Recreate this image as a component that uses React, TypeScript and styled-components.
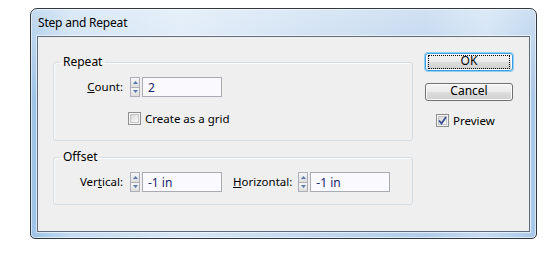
import React from 'react';
import styled, { createGlobalStyle } from 'styled-components';

const GlobalStyle = createGlobalStyle`
	html, body {
		margin: 0;
		padding: 0;
		background: #ffffff;
	}
	body {
		font-family: 'Noto Sans', 'Open Sans', sans-serif;
		font-size: 11.5px;
		color: #000000;
	}
`;

const Page = styled.div`
	padding: 8px 0 0 30px;
	width: 552px;
	height: 255px;
	box-sizing: border-box;
`;

const Window = styled.div`
	width: 507px;
	height: 231px;
	box-sizing: border-box;
	border: 1px solid #33383e;
	border-radius: 7px 7px 5px 5px;
	padding: 0 6px 6px 6px;
	display: flex;
	flex-direction: column;
	background:
		linear-gradient(180deg, rgba(255, 255, 255, 0.4) 0%, rgba(255, 255, 255, 0) 40%),
		linear-gradient(90deg, #9cc2e6 0%, #c4dbf2 8%, #d6e6f6 30%, #c2d8ef 55%, #b2cdea 78%, #c6dcf2 90%, #a9c8e8 100%);
	box-shadow: inset 0 0 0 1px rgba(255, 255, 255, 0.55);
`;

const TitleBar = styled.div`
	height: 27px;
	display: flex;
	align-items: center;
	padding-left: 1px;
	font-size: 12px;
	color: #000000;
	letter-spacing: -0.2px;
`;

const Client = styled.div`
	flex: 1;
	box-sizing: border-box;
	border: 1px solid #5f6b79;
	box-shadow: 0 0 0 1px rgba(255, 255, 255, 0.6);
	background: #efefef;
	display: flex;
	padding: 16px 0 0 15px;
	gap: 12px;
`;

const LeftColumn = styled.div`
	width: 360px;
	padding-top: 2px;
	display: flex;
	flex-direction: column;
	gap: 9px;
`;

const Group = styled.fieldset<{ $bottom: number }>`
	margin: 0;
	padding: 0 0 ${p => p.$bottom}px 0;
	border: 1px solid #d5dde4;
	border-radius: 3px;
	box-shadow: inset 1px 1px 0 #fbfbfb;
	display: flex;
	flex-direction: column;
	gap: 15px;
`;

const Legend = styled.legend`
	font-size: 12px;
	line-height: 14px;
	padding: 0 3px;
	margin-left: 6px;
`;

const Row = styled.div<{ $top?: number; $indent?: number }>`
	display: flex;
	align-items: center;
	margin-top: ${p => p.$top ?? 0}px;
	padding-left: ${p => p.$indent ?? 0}px;
`;

const FieldLabel = styled.label<{ $width?: number; $gap?: number }>`
	${p => (p.$width ? `width: ${p.$width}px;` : '')}
	text-align: right;
	margin-right: ${p => p.$gap ?? 7}px;
	margin-left: ${p => (p.$width ? 0 : 11)}px;
	line-height: 14px;
	white-space: nowrap;
`;

const SpinBox = styled.div`
	width: 10px;
	height: 20px;
	display: flex;
	flex-direction: column;
	margin-right: 2px;
`;

const SpinHalf = styled.div`
	flex: 1;
	box-sizing: border-box;
	border: 1px solid #acb0b6;
	background: linear-gradient(180deg, #f6f6f6, #dedede);
	display: flex;
	align-items: center;
	justify-content: center;

	& + & {
		border-top: none;
	}
`;

const Input = styled.div`
	width: 80px;
	height: 20px;
	box-sizing: border-box;
	border: 1px solid #a9abb2;
	background: #f9f9fe;
	padding: 0 5px;
	display: flex;
	align-items: center;
	color: #1b2672;
	font-size: 12px;
`;

const CheckRow = styled.div<{ $indent: number; $top?: number }>`
	display: flex;
	align-items: center;
	height: 13px;
	padding-left: ${p => p.$indent}px;
	margin-top: ${p => p.$top ?? 0}px;
	gap: 4px;
	line-height: 13px;
`;

const Box = styled.div`
	width: 13px;
	height: 13px;
	box-sizing: border-box;
	border: 1px solid #8e8f8f;
	background: #f4f4f4;
	padding: 1px;

	& > div {
		width: 100%;
		height: 100%;
		box-sizing: border-box;
		border: 1px solid #c6c6c6;
		background: linear-gradient(135deg, #d8d8d8, #fbfbfb);
		position: relative;
	}
`;

const RightColumn = styled.div`
	width: 88px;
	display: flex;
	flex-direction: column;
`;

const Button = styled.div<{ $default?: boolean }>`
	height: 18px;
	box-sizing: border-box;
	border: 1px solid ${p => (p.$default ? '#3c9ee0' : '#707070')};
	border-radius: 3px;
	background: linear-gradient(180deg, #f3f3f3 0%, #ebebeb 48%, #dddddd 52%, #cfcfcf 100%);
	box-shadow: ${p => (p.$default ? '0 0 0 1px #8fd0f5, inset 0 0 0 1px #fcfcfc' : 'inset 0 0 0 1px #fcfcfc')};
	display: flex;
	align-items: center;
	justify-content: center;
	position: relative;
	font-size: 12px;
	line-height: 12px;
	padding-bottom: 2px;
	margin-bottom: 12px;

	${p =>
		p.$default
			? `&::after {
		content: '';
		position: absolute;
		inset: 1px 2px;
		border: 1px dotted #000000;
	}`
			: ''}
`;

const Arrow = ({ up }: { up?: boolean }) => (
	<svg width="5" height="3" viewBox="0 0 5 3">
		<path d={up ? 'M0 3 L2.5 0 L5 3 Z' : 'M0 0 L2.5 3 L5 0 Z'} fill="#5a78ad" />
	</svg>
);

const Spinner = () => (
	<SpinBox>
		<SpinHalf><Arrow up /></SpinHalf>
		<SpinHalf><Arrow /></SpinHalf>
	</SpinBox>
);

const Check = ({ checked }: { checked?: boolean }) => (
	<Box>
		<div>
			{checked && (
				<svg width="9" height="9" viewBox="0 0 9 9" style={{ position: 'absolute', left: -1, top: -1 }}>
					<path d="M1 4.5 L3.5 7.5 L8 1" stroke="#3a4f94" strokeWidth="1.8" fill="none" />
				</svg>
			)}
		</div>
	</Box>
);

export default function App() {
	return (
		<Page>
			<GlobalStyle />
			<Window>
				<TitleBar>Step and Repeat</TitleBar>
				<Client>
					<LeftColumn>
						<Group $bottom={15}>
							<Legend>Repeat</Legend>
							<Row $top={8}>
								<FieldLabel $width={69}><u>C</u>ount:</FieldLabel>
								<Spinner />
								<Input>2</Input>
							</Row>
							<CheckRow $indent={74}>
								<Check />
								<span>Create as a grid</span>
							</CheckRow>
						</Group>
						<Group $bottom={12}>
							<Legend>Offset</Legend>
							<Row $top={8}>
								<FieldLabel $width={69}>Ver<u>t</u>ical:</FieldLabel>
								<Spinner />
								<Input>-1 in</Input>
								<FieldLabel $gap={6}><u>H</u>orizontal:</FieldLabel>
								<Spinner />
								<Input>-1 in</Input>
							</Row>
						</Group>
					</LeftColumn>
					<RightColumn>
						<Button $default>OK</Button>
						<Button>Cancel</Button>
						<CheckRow $indent={11} $top={1}>
							<Check checked />
							<span>Preview</span>
						</CheckRow>
					</RightColumn>
				</Client>
			</Window>
		</Page>
	);
}
